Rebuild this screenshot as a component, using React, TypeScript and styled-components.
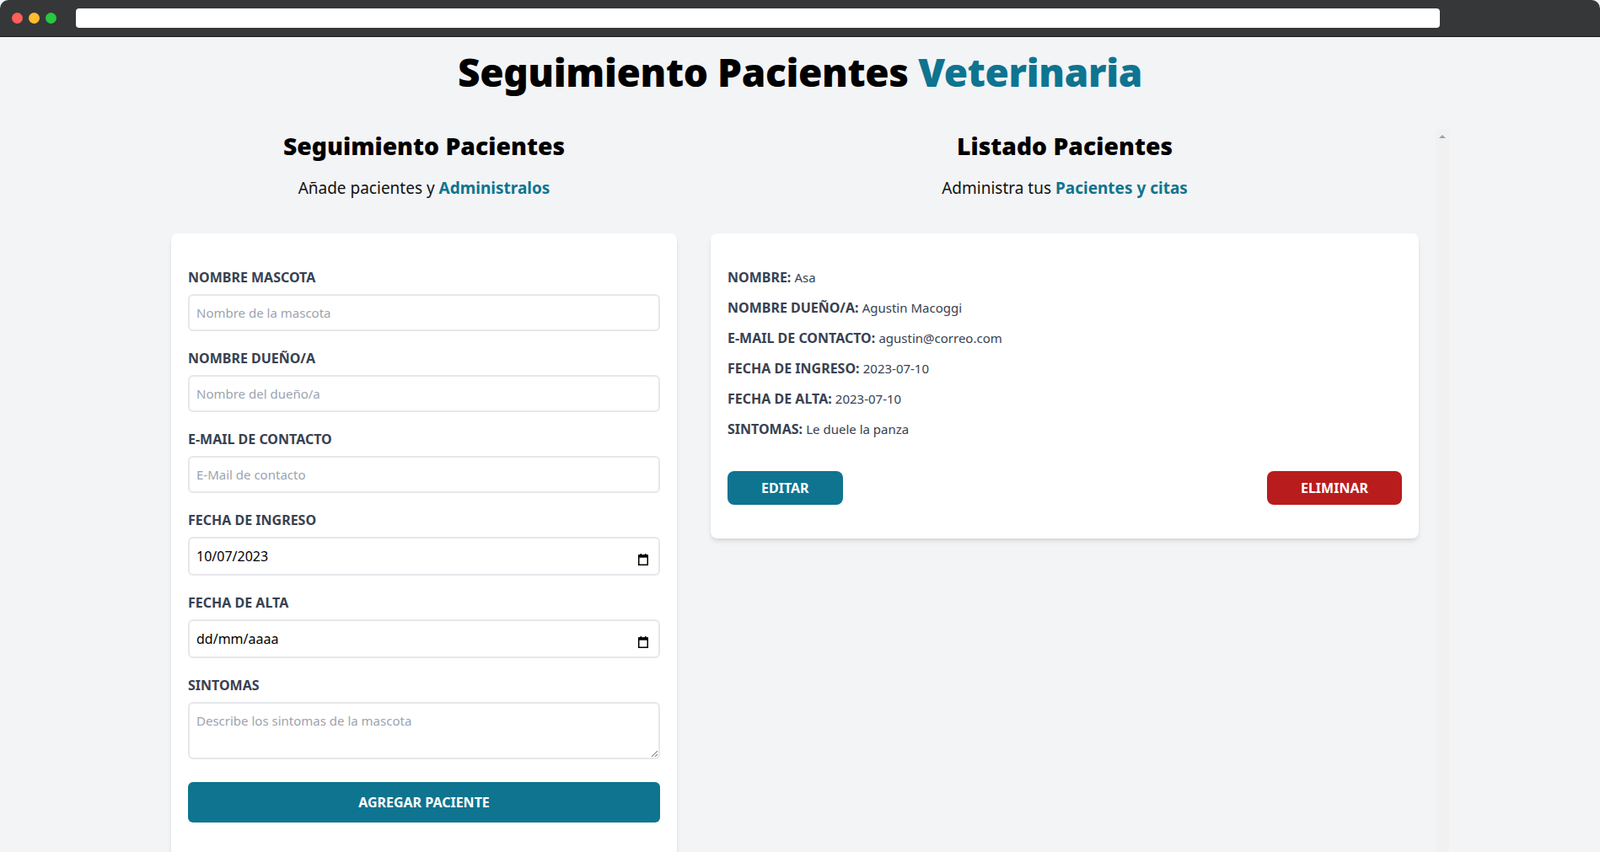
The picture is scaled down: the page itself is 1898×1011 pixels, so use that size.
import React from "react";
import styled, { createGlobalStyle } from "styled-components";

const GlobalStyle = createGlobalStyle`
  html, body {
    margin: 0;
    padding: 0;
    overflow: hidden;
    background: #ffffff;
  }
  * { box-sizing: border-box; }
  body {
    font-family: "Noto Sans", "Open Sans", Arial, sans-serif;
    color: #111827;
  }
`;

const Window = styled.div`
  display: flex;
  flex-direction: column;
  height: 100vh;
  overflow: hidden;
  background: #f3f4f6;
`;

const TitleBar = styled.div`
  flex: none;
  height: 44px;
  display: flex;
  align-items: center;
  padding-left: 14px;
  gap: 7px;
  background: #363739;
  border-bottom: 1px solid #1b1c1e;
  border-radius: 10px 10px 0 0;
`;

const Dot = styled.span<{ $color: string }>`
  width: 13px;
  height: 13px;
  border-radius: 50%;
  background: ${(p) => p.$color};
`;

const UrlBar = styled.div`
  flex: 1;
  height: 23px;
  margin-left: 16px;
  margin-right: 190px;
  background: #ffffff;
  border-radius: 4px;
`;

const Page = styled.main`
  flex: 1;
  overflow: hidden;
`;

const MainTitle = styled.h1`
  margin: 17px auto 0;
  font-size: 46px;
  line-height: 48px;
  letter-spacing: -0.4px;
  font-weight: 900;
  text-align: center;
  color: #000;
`;

const Accent = styled.span`
  color: #0e7490;
`;

const Columns = styled.div`
  display: flex;
  width: 1536px;
  margin: 44px 0 0 calc(50% - 766px);
`;

const FormColumn = styled.section`
  flex: none;
  width: 640px;
  padding: 0 20px;
`;

const ListColumn = styled.section`
  flex: none;
  display: flex;
  width: 896px;
  height: 100vh;
`;

const ListBody = styled.div`
  flex: 1;
  min-width: 0;
  padding: 0 20px;
`;

const ScrollTrack = styled.div`
  flex: none;
  width: 16px;
  display: flex;
  justify-content: center;
  padding-top: 7px;
  background: #f1f1f1;
`;

const Heading = styled.h2`
  margin: 2px 0 0;
  font-size: 28.3px;
  line-height: 36px;
  font-weight: 900;
  text-align: center;
  color: #000;
`;

const Lead = styled.p`
  margin: 18px 0 40px;
  font-size: 19px;
  line-height: 28px;
  text-align: center;
  color: #111;
`;

const LeadStrong = styled.span`
  font-weight: 700;
  color: #0e7490;
`;

const Card = styled.div`
  background: #ffffff;
  border-radius: 8px;
  padding: 40px 20px;
  box-shadow: 0 4px 6px -1px rgba(0, 0, 0, 0.1), 0 2px 4px -2px rgba(0, 0, 0, 0.1);
`;

const Field = styled.div<{ $gap?: number }>`
  margin-bottom: ${(p) => p.$gap ?? 20}px;
`;

const Label = styled.label`
  display: block;
  font-size: 16px;
  line-height: 24px;
  font-weight: 700;
  text-transform: uppercase;
  color: #374151;
`;

const Input = styled.input<{ $date?: boolean }>`
  display: block;
  width: 100%;
  margin-top: 8px;
  height: ${(p) => (p.$date ? "46px" : "44px")};
  padding: 8px;
  border: 2px solid #e5e7eb;
  border-radius: 6px;
  font-family: inherit;
  font-size: ${(p) => (p.$date ? "16px" : "15px")};
  line-height: 24px;
  color: #000;
  background: #fff;
  outline: none;

  &::placeholder {
    color: ${(p) => (p.$date ? "#000" : "#9ca3af")};
  }
`;

const DateWrap = styled.div`
  position: relative;
`;

const CalendarIcon = styled.svg`
  position: absolute;
  right: 14px;
  top: 50%;
  margin-top: -3px;
  width: 12px;
  height: 14px;
`;

const TextArea = styled.textarea`
  display: block;
  width: 100%;
  margin-top: 8px;
  height: 68px;
  padding: 8px;
  border: 2px solid #e5e7eb;
  border-radius: 6px;
  font-family: inherit;
  font-size: 15px;
  line-height: 24px;
  color: #000;
  resize: vertical;
  outline: none;

  &::placeholder {
    color: #9ca3af;
  }
`;

const SubmitButton = styled.button`
  display: block;
  width: 100%;
  padding: 12px;
  border: none;
  border-radius: 6px;
  background: #0e7490;
  color: #fff;
  font-family: inherit;
  font-size: 16px;
  line-height: 24px;
  font-weight: 700;
  text-transform: uppercase;
  cursor: pointer;
`;

const InfoLine = styled.p`
  margin: 0 0 12px;
  font-size: 16px;
  line-height: 24px;
  font-weight: 700;
  text-transform: uppercase;
  color: #374151;
`;

const InfoValue = styled.span`
  font-size: 15px;
  font-weight: 400;
  text-transform: none;
`;

const Actions = styled.div`
  display: flex;
  justify-content: space-between;
  margin-top: 38px;
`;

const ActionButton = styled.button<{ $tone: "primary" | "danger" }>`
  padding: 8px 40px;
  border: none;
  border-radius: 8px;
  background: ${(p) => (p.$tone === "danger" ? "#b91c1c" : "#0e7490")};
  color: #fff;
  font-family: inherit;
  font-size: 16px;
  line-height: 24px;
  font-weight: 700;
  text-transform: uppercase;
  cursor: pointer;
`;

const Calendar = () => (
  <CalendarIcon viewBox="0 0 12 14" aria-hidden="true">
    <rect x="2.5" y="0" width="1.6" height="2.5" fill="#000" />
    <rect x="7.9" y="0" width="1.6" height="2.5" fill="#000" />
    <rect x="0" y="1.5" width="12" height="3.2" fill="#000" />
    <rect x="0.75" y="2" width="10.5" height="11.25" fill="none" stroke="#000" strokeWidth="1.5" />
  </CalendarIcon>
);

const ArrowUp = () => (
  <svg width="8" height="4" viewBox="0 0 8 4" aria-hidden="true">
    <polygon points="0,4 4,0 8,4" fill="#a3a3a3" />
  </svg>
);

const patient = [
  ["Nombre", "Asa"],
  ["Nombre dueño/a", "Agustin Macoggi"],
  ["E-mail de contacto", "agustin@correo.com"],
  ["Fecha de ingreso", "2023-07-10"],
  ["Fecha de alta", "2023-07-10"],
  ["Sintomas", "Le duele la panza"],
];

export default function App() {
  return (
    <>
      <GlobalStyle />
      <Window>
        <TitleBar>
          <Dot $color="#fe5f57" />
          <Dot $color="#febc2e" />
          <Dot $color="#28c840" />
          <UrlBar />
        </TitleBar>
        <Page>
          <MainTitle>
            Seguimiento Pacientes <Accent>Veterinaria</Accent>
          </MainTitle>
          <Columns>
            <FormColumn>
              <Heading>Seguimiento Pacientes</Heading>
              <Lead>
                Añade pacientes y <LeadStrong>Administralos</LeadStrong>
              </Lead>
              <Card as="form" onSubmit={(e: React.FormEvent) => e.preventDefault()}>
                <Field>
                  <Label htmlFor="mascota">Nombre Mascota</Label>
                  <Input id="mascota" type="text" placeholder="Nombre de la mascota" />
                </Field>
                <Field>
                  <Label htmlFor="propietario">Nombre Dueño/a</Label>
                  <Input id="propietario" type="text" placeholder="Nombre del dueño/a" />
                </Field>
                <Field>
                  <Label htmlFor="email">E-Mail de contacto</Label>
                  <Input id="email" type="email" placeholder="E-Mail de contacto" />
                </Field>
                <Field>
                  <Label htmlFor="ingreso">Fecha de ingreso</Label>
                  <DateWrap>
                    <Input id="ingreso" type="text" $date defaultValue="10/07/2023" />
                    <Calendar />
                  </DateWrap>
                </Field>
                <Field>
                  <Label htmlFor="alta">Fecha de alta</Label>
                  <DateWrap>
                    <Input id="alta" type="text" $date placeholder="dd/mm/aaaa" />
                    <Calendar />
                  </DateWrap>
                </Field>
                <Field $gap={27}>
                  <Label htmlFor="sintomas">Sintomas</Label>
                  <TextArea id="sintomas" placeholder="Describe los sintomas de la mascota" />
                </Field>
                <SubmitButton type="submit">Agregar Paciente</SubmitButton>
              </Card>
            </FormColumn>
            <ListColumn>
              <ListBody>
                <Heading>Listado Pacientes</Heading>
                <Lead>
                  Administra tus <LeadStrong>Pacientes y citas</LeadStrong>
                </Lead>
                <Card>
                  {patient.map(([label, value]) => (
                    <InfoLine key={label}>
                      {label}: <InfoValue>{value}</InfoValue>
                    </InfoLine>
                  ))}
                  <Actions>
                    <ActionButton type="button" $tone="primary">Editar</ActionButton>
                    <ActionButton type="button" $tone="danger">Eliminar</ActionButton>
                  </Actions>
                </Card>
              </ListBody>
              <ScrollTrack>
                <ArrowUp />
              </ScrollTrack>
            </ListColumn>
          </Columns>
        </Page>
      </Window>
    </>
  );
}
